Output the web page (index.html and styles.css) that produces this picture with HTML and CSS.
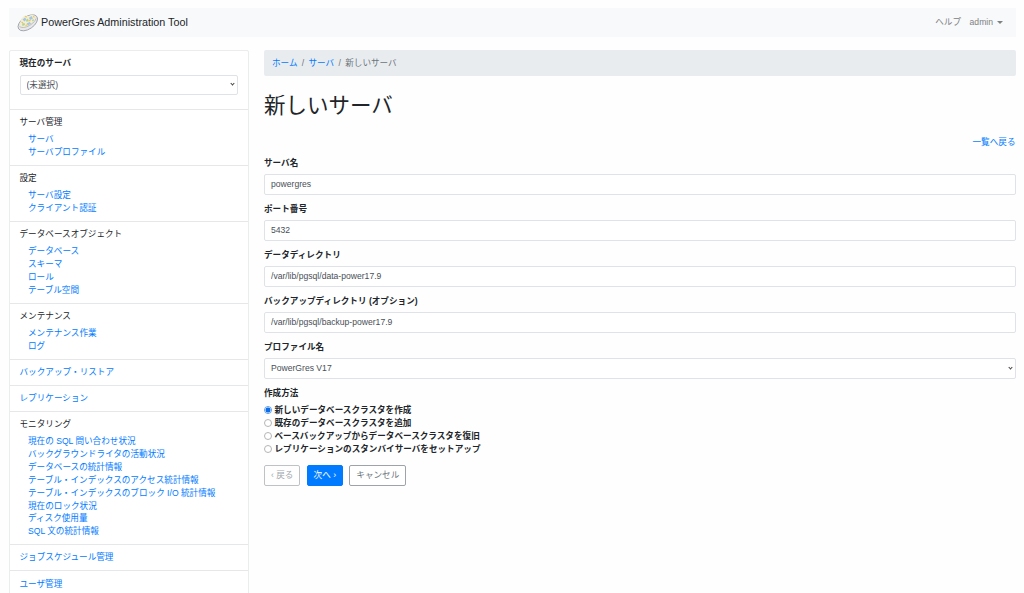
FILE: index.html
```html
<!DOCTYPE html>
<html lang="ja">
<head>
    <meta charset="UTF-8">
    <meta name="viewport" content="width=device-width, initial-scale=1.0">
    <title>PowerGres Administration Tool</title>
    <link rel="stylesheet" href="styles.css">
</head>
<body>
    <nav class="navbar">
        <a class="brand" href="#">
            <svg class="logo" viewBox="0 0 22 20" width="22" height="20">
                <ellipse cx="10.8" cy="9.8" rx="11" ry="6.2" transform="rotate(-34 10.8 9.8)" fill="#e6e8ec" stroke="#a2a5ab" stroke-width=".9"/>
                <path d="M3 11.5 4.5 5.5 8 2.2l3.5 1L15 1.4l3.5 2.2-.6 4.7-4.4 3.8-4.6 2.6-4.4.2z" fill="#f3eed0"/>
                <path d="m5.5 6.5 2.5-2 1.5 2-2 2zM12 4.8l2.5-1.8 1.5 2.5-3 1.5zM9.6 10.5l3-1.5 1.5 1.5-3 2z" fill="#a3c5e8"/>
                <path d="m9 7 2-1.5.5 2.5-2 1zM5 10.5l2.5-.5.5 2-2.5 1zM15 7l1.5-1 .5 1.5-1.5 1z" fill="#b0d3a0"/>
                <path d="m8 3.5 2 .5M4.5 9l1.5 1M16 3.4l1.5 1M8.5 12.6l2-.8M11.5 8l2-.6" stroke="#ecc25c" stroke-width="1.1"/>
                <path d="M2.5 13.5c2.8 2 7.6.8 11.5-2 2.5-1.8 4.5-4 5-6" fill="none" stroke="#b0b3b8" stroke-width=".8"/>
            </svg>
            PowerGres Administration Tool
        </a>
        <div class="nav-links">
            <a href="#">ヘルプ</a>
            <a class="dropdown" href="#">admin</a>
        </div>
    </nav>

    <div class="container">
        <aside class="sidebar">
            <div class="section current">
                <label for="current">現在のサーバ</label>
                <div class="select-box">
                    <select id="current" class="control">
                        <option>(未選択)</option>
                    </select>
                </div>
            </div>
            <div class="section">
                <p>サーバ管理</p>
                <ul>
                    <li><a href="#">サーバ</a></li>
                    <li><a href="#">サーバプロファイル</a></li>
                </ul>
            </div>
            <div class="section">
                <p>設定</p>
                <ul>
                    <li><a href="#">サーバ設定</a></li>
                    <li><a href="#">クライアント認証</a></li>
                </ul>
            </div>
            <div class="section">
                <p>データベースオブジェクト</p>
                <ul>
                    <li><a href="#">データベース</a></li>
                    <li><a href="#">スキーマ</a></li>
                    <li><a href="#">ロール</a></li>
                    <li><a href="#">テーブル空間</a></li>
                </ul>
            </div>
            <div class="section">
                <p>メンテナンス</p>
                <ul>
                    <li><a href="#">メンテナンス作業</a></li>
                    <li><a href="#">ログ</a></li>
                </ul>
            </div>
            <div class="section"><p><a href="#">バックアップ・リストア</a></p></div>
            <div class="section"><p><a href="#">レプリケーション</a></p></div>
            <div class="section">
                <p>モニタリング</p>
                <ul>
                    <li><a href="#">現在の SQL 問い合わせ状況</a></li>
                    <li><a href="#">バックグラウンドライタの活動状況</a></li>
                    <li><a href="#">データベースの統計情報</a></li>
                    <li><a href="#">テーブル・インデックスのアクセス統計情報</a></li>
                    <li><a href="#">テーブル・インデックスのブロック I/O 統計情報</a></li>
                    <li><a href="#">現在のロック状況</a></li>
                    <li><a href="#">ディスク使用量</a></li>
                    <li><a href="#">SQL 文の統計情報</a></li>
                </ul>
            </div>
            <div class="section"><p><a href="#">ジョブスケジュール管理</a></p></div>
            <div class="section"><p><a href="#">ユーザ管理</a></p></div>
        </aside>

        <main class="content">
            <div class="breadcrumb">
                <a href="#">ホーム</a>
                <span>/</span>
                <a href="#">サーバ</a>
                <span>/</span>
                <span>新しいサーバ</span>
            </div>

            <h1>新しいサーバ</h1>
            <div class="back-link"><a href="#">一覧へ戻る</a></div>

            <form>
                <div class="form-group">
                    <label for="name">サーバ名</label>
                    <input type="text" id="name" class="control" value="powergres">
                </div>
                <div class="form-group">
                    <label for="port">ポート番号</label>
                    <input type="text" id="port" class="control" value="5432">
                </div>
                <div class="form-group">
                    <label for="data_dir">データディレクトリ</label>
                    <input type="text" id="data_dir" class="control" value="/var/lib/pgsql/data-power17.9">
                </div>
                <div class="form-group">
                    <label for="backup_dir">バックアップディレクトリ (オプション)</label>
                    <input type="text" id="backup_dir" class="control" value="/var/lib/pgsql/backup-power17.9">
                </div>
                <div class="form-group">
                    <label for="profile">プロファイル名</label>
                    <div class="select-box">
                        <select id="profile" class="control">
                            <option>PowerGres V17</option>
                        </select>
                    </div>
                </div>
                <div class="form-group methods">
                    <label>作成方法</label>
                    <label class="radio"><input type="radio" name="method" checked>新しいデータベースクラスタを作成</label>
                    <label class="radio"><input type="radio" name="method">既存のデータベースクラスタを追加</label>
                    <label class="radio"><input type="radio" name="method">ベースバックアップからデータベースクラスタを復旧</label>
                    <label class="radio"><input type="radio" name="method">レプリケーションのスタンバイサーバをセットアップ</label>
                </div>
                <div class="buttons">
                    <button type="button" class="btn" disabled>‹ 戻る</button>
                    <button type="submit" class="btn btn-primary">次へ ›</button>
                    <button type="button" class="btn">キャンセル</button>
                </div>
            </form>
        </main>
    </div>
</body>
</html>
```
FILE: styles.css
```css
* {
    box-sizing: border-box;
}

html {
    height: 100%;
    overflow: hidden;
}

body {
    height: 100%;
    margin: 0;
    padding: 8px 8.5px 0;
    overflow: hidden;
    font-family: "Liberation Sans", "Noto Sans CJK JP", sans-serif;
    font-size: 8.6px;
    line-height: 12.84px;
    color: #212529;
    background: #fefefe;
}

a {
    color: #007bff;
    text-decoration: none;
}

p, ul, h1 {
    margin: 0;
    padding: 0;
    font-weight: normal;
    list-style: none;
}

.navbar {
    display: flex;
    justify-content: space-between;
    align-items: center;
    height: 29px;
    padding: 0 12.5px 0 8.5px;
    background: #f8f9fa;
}

.brand {
    display: flex;
    align-items: center;
    gap: 2px;
    font-size: 10.75px;
    color: #212529;
}

.logo {
    display: block;
}

.nav-links {
    display: flex;
    gap: 8.6px;
}

.nav-links a {
    color: #808182;
}

.dropdown::after {
    content: "";
    display: inline-block;
    margin-left: 4px;
    vertical-align: 1.5px;
    border-top: 3px solid #808182;
    border-left: 3px solid transparent;
    border-right: 3px solid transparent;
}

.container {
    display: flex;
    gap: 15.5px;
    margin-top: 13px;
}

.sidebar {
    flex: 0 0 240px;
    border: 1px solid #ebecec;
    border-radius: 2px;
    background: #fff;
}

.section {
    padding: 6.4px 10px 5.9px;
    border-bottom: 1px solid #e6e7e8;
}

.section ul {
    padding: 4.2px 0 0 8.5px;
}

.section li {
    white-space: nowrap;
}

.current {
    height: 59px;
}

label {
    display: block;
    margin-bottom: 4.3px;
    font-weight: bold;
}

.control {
    display: block;
    width: 100%;
    height: 20.3px;
    margin: 0;
    padding: 0 6px;
    font-family: inherit;
    font-size: 8.6px;
    color: #495057;
    background: #fff;
    border: 1px solid #dfe3e7;
    border-radius: 2px;
    appearance: none;
}

.select-box {
    position: relative;
}

.select-box::after {
    content: "";
    position: absolute;
    top: 7.5px;
    right: 4px;
    width: 3px;
    height: 3px;
    box-sizing: border-box;
    border-right: 1px solid #444;
    border-bottom: 1px solid #444;
    transform: rotate(45deg);
}

.content {
    flex: 1;
}

.breadcrumb {
    display: flex;
    gap: 4.3px;
    padding: 7px 8px 5.8px;
    color: #6c757d;
    background: #e9ecef;
    border-radius: 2px;
}

h1 {
    margin-top: 17.2px;
    font-size: 21.5px;
    line-height: 26px;
}

.back-link {
    margin: 16.9px 0 8.5px;
    text-align: right;
}

.form-group {
    margin-bottom: 8.6px;
}

.methods {
    margin-bottom: 8.5px;
}

.methods > label:first-child {
    margin-bottom: 3.6px;
}

.radio {
    display: flex;
    align-items: center;
    gap: 2.5px;
    height: 13.1px;
    margin: 0;
}

.radio input {
    width: 8px;
    height: 8px;
    margin: 0;
    border: 1px solid #b5b5b5;
    border-radius: 50%;
    background: #fff;
    appearance: none;
}

.radio input:checked {
    border-color: #5a9cf0;
    background: radial-gradient(circle, #0d6be6 2.2px, #fff 2.8px);
}

.buttons {
    display: flex;
    gap: 6.5px;
}

.btn {
    height: 21px;
    padding: 0 5.9px;
    font-family: inherit;
    font-size: 8.6px;
    line-height: 12.84px;
    white-space: nowrap;
    color: #6c757d;
    background: #fff;
    border: 1px solid #9da3a8;
    border-radius: 2px;
}

.btn:disabled {
    opacity: 0.65;
}

.btn-primary {
    color: #fff;
    background: #007bff;
    border-color: #007bff;
}
```
